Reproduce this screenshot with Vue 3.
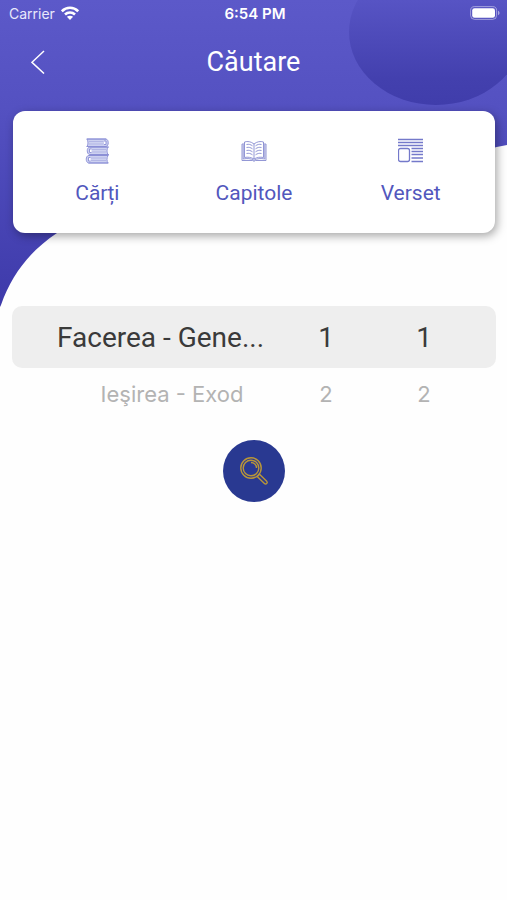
<script setup>
import { ref } from 'vue'

const tabs = [
  { id: 'books', label: 'Cărți' },
  { id: 'chapters', label: 'Capitole' },
  { id: 'verse', label: 'Verset' },
]
const activeTab = ref('books')

const rows = [
  { id: 'current', cells: ['Facerea - Gene...', '1', '1'] },
  { id: 'next', cells: ['Ieşirea - Exod', '2', '2'] },
]
</script>

<template>
  <div class="screen">
    <svg class="backdrop" viewBox="0 0 507 310" preserveAspectRatio="none" aria-hidden="true">
      <defs>
        <linearGradient id="sky" x1="0" y1="0" x2="0" y2="1">
          <stop offset="0" stop-color="#5c59c9" />
          <stop offset="0.35" stop-color="#5451c1" />
          <stop offset="1" stop-color="#3e3aaa" />
        </linearGradient>
        <linearGradient id="orb" gradientUnits="userSpaceOnUse" x1="0" y1="0" x2="0" y2="105">
          <stop offset="0" stop-color="#5754c4" />
          <stop offset="0.75" stop-color="#4340ae" />
          <stop offset="1" stop-color="#403dab" />
        </linearGradient>
      </defs>
      <path d="M0 0H507V145C480 149 450 165 400 185C300 215 130 195 57 233C30 251 12 274 1 305L0 307Z" fill="url(#sky)" />
      <ellipse cx="436" cy="32" rx="87" ry="73" fill="url(#orb)" />
    </svg>

    <div class="status">
      <span class="carrier">
        Carrier
        <svg width="18" height="14" viewBox="0 0 18 14" fill="none" stroke="#fff" stroke-width="2.6" aria-hidden="true">
          <path d="M.8 5.200C5.500 .6 12.500 .6 17.200 5.200" />
          <path d="M4 8.500C6.800 5.800 11.200 5.800 14 8.500" />
          <path d="M9 14L5.900 10.800C7.700 9.300 10.300 9.300 12.100 10.800Z" fill="#fff" stroke="none" />
        </svg>
      </span>
      <span class="time">6:54 PM</span>
      <svg class="battery" width="31" height="14" viewBox="0 0 31 14" aria-hidden="true">
        <rect x="0.600" y="0.600" width="26" height="12.800" rx="4" fill="none" stroke="#fff" stroke-opacity=".45" />
        <rect x="2.200" y="2.200" width="22.800" height="9.600" rx="2.300" fill="#fff" />
        <path d="M28 4.800C30 5.500 30 8.500 28 9.200Z" fill="#fff" fill-opacity=".5" />
      </svg>
    </div>

    <header class="bar">
      <button class="back" type="button" aria-label="Înapoi">
        <svg width="14" height="24" viewBox="0 0 14 24" fill="none" stroke="#fff" stroke-width="1.500">
          <path d="M13 1L1 12.300L13 23.500" />
        </svg>
      </button>
      <h1>Căutare</h1>
    </header>

    <nav class="card">
      <button
        v-for="tab in tabs"
        :key="tab.id"
        class="tab"
        type="button"
        :aria-pressed="activeTab === tab.id"
        @click="activeTab = tab.id"
      >
        <svg v-if="tab.id === 'books'" width="26" height="26" viewBox="0 0 26 26" fill="none" stroke="#8b8fd6" stroke-width=".9" aria-hidden="true">
          <g fill="#cdd1f0">
            <path d="M3 1H22C25 1.500 25 8 22 8.500H3C4.300 7 4.300 3 3 1Z" />
            <path d="M24 9H5.500C2.500 9.500 2.500 16 5.500 16.500H24C22.700 15 22.700 11 24 9Z" />
            <path d="M24 17.500H4.500C1.500 18 1.500 24.500 4.500 25H24C22.700 23.500 22.700 19.500 24 17.500Z" />
          </g>
          <path d="M2.500 1H22M2.500 8.500H22M5.500 9H25M5.500 16.500H25M4.500 17.500H24.500M4.500 25H24.500" />
          <path d="M5 3.500H19.500M5 6H19.500M7.500 11.500H22M7.500 14H22M7 20H22M7 22.500H22" stroke-opacity=".45" />
          <path d="M20 3H22V6.500H20M7.500 11H5.500V14.500H7.500M6.500 19.500H4.500V23H6.500" fill="#fff" />
        </svg>
        <svg v-else-if="tab.id === 'chapters'" width="26" height="26" viewBox="0 0 26 26" fill="none" stroke="#878bd0" stroke-width=".9" aria-hidden="true">
          <path d="M13 6C10 3.500 6.500 3 3.500 4V19.500C7 18.800 10 19.300 13 21C16 19.300 19 18.800 22.500 19.500V4C19.500 3 16 3.500 13 6ZM13 6V21" />
          <path d="M3.500 6H1V22.500H11.500C12 23.300 14 23.300 14.500 22.500H25V6H22.500M2.200 6.500V21C6 20.200 10 20.400 13 22.300C16 20.400 20 20.200 23.800 21V6.500" />
          <path d="M5.500 6.500C8 6 9.500 6.500 11.500 7.800M5.500 9.500C8 9 9.500 9.500 11.500 10.800M5.500 12.500C8 12 9.500 12.500 11.500 13.800M5.500 15.500C8 15 9.500 15.500 11.500 16.800M20.500 6.500C18 6 16.500 6.500 14.500 7.800M20.500 9.500C18 9 16.500 9.500 14.500 10.800M20.500 12.500C18 12 16.500 12.500 14.500 13.800M20.500 15.500C18 15 16.500 15.500 14.500 16.800" />
        </svg>
        <svg v-else width="26" height="26" viewBox="0 0 26 26" fill="none" stroke="#7479ca" stroke-width="1.300" aria-hidden="true">
          <path d="M0 1.500H25M0 4.500H25M0 7.500H25M13.500 10.500H25M13.500 13.500H25M13.500 16.500H25M13.500 20H25M13.500 23.500H25" />
          <rect x="0.500" y="10.500" width="11" height="13" rx="2" />
        </svg>
        <span>{{ tab.label }}</span>
      </button>
    </nav>

    <section class="picker" aria-label="Alege pasajul">
      <div v-for="row in rows" :key="row.id" class="row" :class="row.id">
        <button v-for="(cell, i) in row.cells" :key="i" class="cell" type="button">{{ cell }}</button>
      </div>
    </section>

    <button class="search" type="button" aria-label="Caută">
      <svg width="30" height="30" viewBox="0 0 30 30" fill="none" stroke="#b99638" stroke-width="1.400">
        <circle cx="12" cy="12" r="10.200" />
        <circle cx="12" cy="12" r="7.800" />
        <path d="M12 6.500A5.500 5.500 0 0 1 17.500 12" />
        <path d="M18.200 20.500L20.500 18.200L27.700 25.200C29.200 26.800 27 29 25.400 27.500Z" />
      </svg>
    </button>
  </div>
</template>

<style>
body {
  margin: 0;
  background: #fefefe;
}
</style>

<style scoped>
.screen {
  position: relative;
  min-height: 100vh;
  display: flex;
  flex-direction: column;
  font-family: Inter, "Liberation Sans", sans-serif;
}

.backdrop {
  position: absolute;
  top: 0;
  left: 0;
  width: 100%;
  height: 310px;
}

.status,
.bar,
.card,
.picker,
.search {
  position: relative;
}

button {
  margin: 0;
  padding: 0;
  border: 0;
  background: none;
  font: inherit;
  color: inherit;
  cursor: pointer;
}

svg {
  display: block;
}

.status {
  display: grid;
  grid-template-columns: 1fr auto 1fr;
  align-items: center;
  height: 26px;
  padding: 0 6px 0 9px;
  color: #fff;
  font-size: 14px;
}

.carrier {
  display: flex;
  align-items: center;
  gap: 6px;
  color: #e9e8fb;
}

.time {
  font-size: 15px;
  font-weight: 600;
}

.battery {
  justify-self: end;
}

.bar {
  display: grid;
  grid-template-columns: 48px 1fr 48px;
  align-items: center;
  height: 72px;
  padding: 0 14px;
  color: #fff;
}

.back {
  display: flex;
  align-items: center;
  justify-content: center;
  height: 48px;
}

h1 {
  margin: 0;
  text-align: center;
  font-family: Roboto, sans-serif;
  font-size: 27px;
  line-height: 32px;
  font-weight: 400;
}

.card {
  display: grid;
  grid-template-columns: repeat(3, 1fr);
  margin: 13px 12px 0 13px;
  padding: 27px 6px 26px;
  border-radius: 12px;
  background: #fff;
  box-shadow: 2px 3px 10px rgba(0, 0, 0, 0.35);
}

.tab {
  display: flex;
  flex-direction: column;
  align-items: center;
  gap: 15px;
  color: #5257bd;
  font-family: Roboto, sans-serif;
  font-size: 21px;
  line-height: 28px;
}

.picker {
  margin: 73px 11px 0 12px;
}

.row {
  display: grid;
  grid-template-columns: 220fr 98fr 98fr;
  align-items: center;
  padding: 0 23px 0 45px;
  white-space: nowrap;
}

.cell {
  min-width: 0;
}

.current {
  height: 62px;
  border-radius: 10px;
  background: #eee;
  color: #3a3a3a;
  font-family: Roboto, sans-serif;
  font-size: 28px;
}

.current .cell:first-child {
  text-align: left;
}

.next {
  height: 52px;
  color: #b3b3b3;
  font-size: 22px;
}

.next .cell:first-child {
  padding-left: 10px;
}

.search {
  display: flex;
  align-items: center;
  justify-content: center;
  align-self: center;
  width: 62px;
  height: 62px;
  margin-top: 20px;
  border-radius: 50%;
  background: #293991;
}
</style>
